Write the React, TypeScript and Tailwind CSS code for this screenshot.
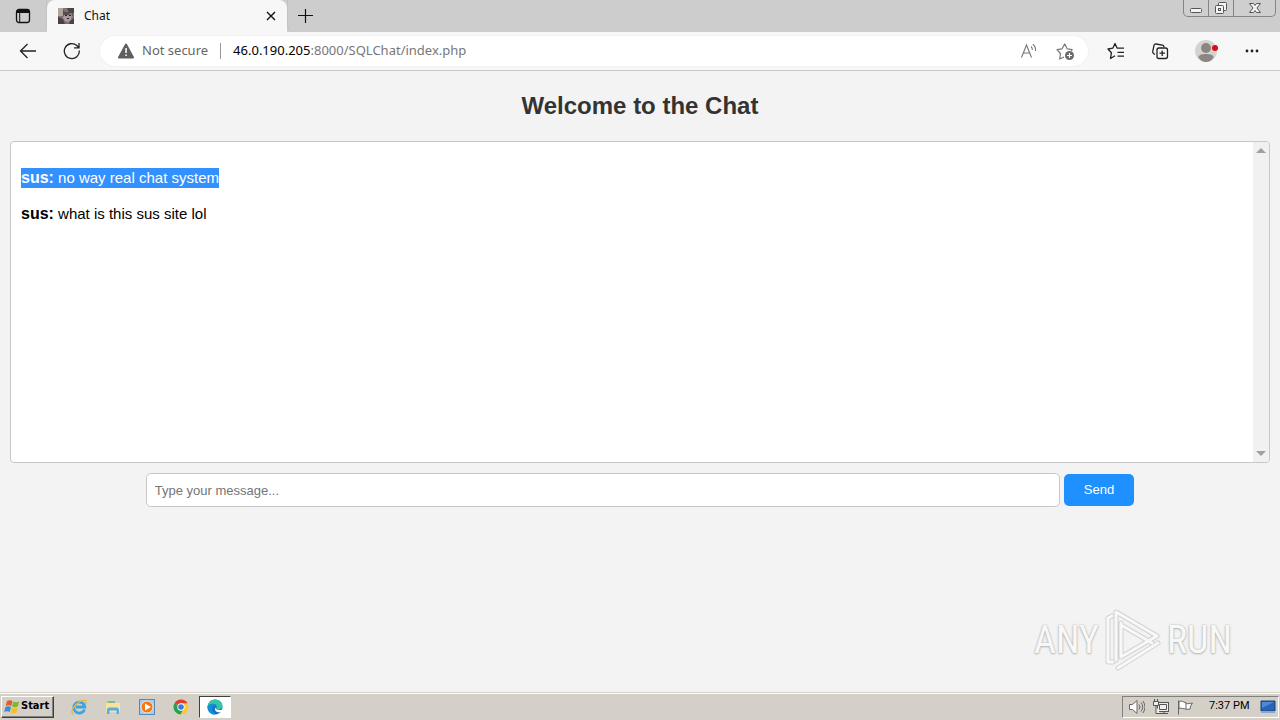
import { useState } from 'react';

const messages = [
  { id: 1, user: 'sus', text: 'no way real chat system', selected: true },
  { id: 2, user: 'sus', text: 'what is this sus site lol', selected: false },
];

function TabBar() {
  return (
    <div className="flex h-8 shrink-0 bg-[#cdcdcd]">
      <button aria-label="Tab actions" className="flex w-[47px] items-center justify-center rounded-br-lg border-r border-[#c2c2c2]">
        <svg className="h-4 w-4" viewBox="0 0 16 16" fill="none" stroke="#111">
          <rect x="1.5" y="1.5" width="13" height="13" rx="2.5" strokeWidth="1.3" />
          <path d="M2 3.5h12" strokeWidth="3" />
          <path d="M4.7 4v10" strokeWidth="1" />
        </svg>
      </button>
      <div className="flex w-60 items-center rounded-t-lg bg-[#f7f7f7] pr-2 pl-[11px]">
        <svg className="h-4 w-4" viewBox="0 0 16 16">
          <rect width="16" height="16" fill="#7d7370" />
          <path d="M0 0h5v8H0z" fill="#b3a59d" />
          <path d="M9 0h7v5h-5z" fill="#4c4543" />
          <path d="M6 6l2-1h3l3 2-1 5-3 2-3-1-2-3z" fill="#a99a9d" />
          <path d="M5 2l3 3-3 3zM14 3l-3 3 4 2zM6 4h8v3H6z" fill="#564e4f" />
          <path d="M7 7h2v1H7zM11 7h2v1h-2zM9 10h2v1H9z" fill="#292328" />
          <path d="M0 9l5 2 2 5H0zM12 13l4-3v6h-5z" fill="#494241" />
        </svg>
        <span className="ml-[10px] flex-1 text-xs">Chat</span>
        <button aria-label="Close tab" className="flex h-4 w-4 items-center justify-center">
          <svg className="h-[10px] w-[10px]" viewBox="0 0 10 10" stroke="#111" strokeWidth="1.4">
            <path d="M1 1l8 8M9 1L1 9" />
          </svg>
        </button>
      </div>
      <button aria-label="New tab" className="flex w-[34px] items-center justify-center rounded-bl-lg border-l border-[#c2c2c2]">
        <svg className="h-4 w-4" viewBox="0 0 16 16" stroke="#111" strokeWidth="1.2">
          <path d="M8.500 1v14M1 7.500h15" />
        </svg>
      </button>
      <div className="ml-auto mr-1 flex h-[17px] overflow-hidden rounded-b-[5px] border border-t-0 border-[#858585] bg-[#cfcfcf]">
        <button aria-label="Minimize" className="flex w-[25px] items-center justify-center border-r border-[#858585]">
          <svg className="h-4 w-4" viewBox="0 0 16 16" fill="#f4f4f4" stroke="#555">
            <rect x="2.5" y="8.5" width="11" height="4" rx="1" />
          </svg>
        </button>
        <button aria-label="Restore" className="flex w-[25px] items-center justify-center border-r border-[#858585]">
          <svg className="h-4 w-4" viewBox="0 0 16 16" fill="#f4f4f4" stroke="#555">
            <rect x="5.500" y="2.500" width="8" height="8" rx="1" />
            <rect x="2.500" y="5.500" width="8" height="8" rx="1" />
            <rect x="5.500" y="8.500" width="2" height="2" />
          </svg>
        </button>
        <button aria-label="Close window" className="flex w-[41px] items-center justify-center">
          <svg className="h-4 w-4" viewBox="0 0 16 16" fill="#f4f4f4" stroke="#555">
            <path d="M2.500 3.500h4L8 5.500l1.500-2h4l-3.500 4.500 3.500 4.500h-4L8 10.500l-1.500 2h-4L6 8z" />
          </svg>
        </button>
      </div>
    </div>
  );
}

function Toolbar() {
  return (
    <div className="flex h-[39px] shrink-0 items-center border-b border-[#c8c8c8] bg-[#f7f7f7]">
      <button aria-label="Back" className="ml-[19px] mr-[26px]">
        <svg className="h-[18px] w-[18px]" viewBox="0 0 18 18" fill="none" stroke="#222" strokeWidth="1.3">
          <path d="M17 9H2M8.500 2L1.500 9l7 7" />
        </svg>
      </button>
      <button aria-label="Refresh" className="mr-[19px]">
        <svg className="h-[18px] w-[18px]" viewBox="0 0 18 18" fill="none" stroke="#222" strokeWidth="1.3">
          <path d="M16.300 8.500A7.500 7.500 0 1 1 13.800 3.500L15.800 5.500M16 1v4.800h-5" />
        </svg>
      </button>
      <div className="flex h-[30px] flex-1 items-center rounded-full bg-white pr-3 pl-[17px] text-[13px] shadow-[0_0_0_1px_#f1f1f1]">
        <svg className="mr-[7px] h-[18px] w-[18px]" viewBox="0 0 18 18">
          <path d="M9 1.500c.4 0 .7.200.9.600l7 13c.3.700 0 1.400-.8 1.400H1.900c-.8 0-1.100-.7-.8-1.400l7-13c.2-.4.500-.6.900-.6z" fill="#5f5f5f" />
          <path d="M8.300 6h1.500v5H8.300zM8.300 12.500h1.500V14H8.300z" fill="#fff" />
        </svg>
        <span className="text-[#666]">Not secure</span>
        <span className="mx-3 h-4 w-px bg-[#999]" />
        <span className="flex-1 text-[#777]">
          <span className="text-black">46.0.190.205</span>:8000/SQLChat/index.php
        </span>
        <button aria-label="Read aloud" className="mr-[18px]">
          <svg className="h-[18px] w-[18px]" viewBox="0 0 18 18" fill="none" stroke="#777" strokeWidth="1.1">
            <path d="M1.500 15.500L6.500 3l5 12.500M3.300 11h6.400M11 4.500c1 .8 1.500 2 1.300 3.500M12.800 2.200c2 1.500 3 4 2.700 6.800" />
          </svg>
        </button>
        <button aria-label="Add to favorites">
          <svg className="h-5 w-5" viewBox="0 0 20 20" fill="none" stroke="#777" strokeWidth="1.2" strokeLinejoin="round">
            <path d="M8 16l-4.300 2 .8-5.500L1 8.600l5-.8L8.700 3l2.500 4.800 5 .8-1 1.200" />
            <circle cx="13.5" cy="14.5" r="4.5" fill="#6a6a6a" stroke="none" />
            <path d="M13.500 12v5M11 14.500h5" stroke="#fff" />
          </svg>
        </button>
      </div>
      <div className="ml-[18px] mr-5 flex items-center">
        <button aria-label="Favorites">
          <svg className="h-5 w-5" viewBox="0 0 20 20" fill="none" stroke="#222" strokeWidth="1.3" strokeLinejoin="round">
            <path d="M9 14.800l-4.500 2.700.9-5.700L2 8l4.800-.8L9 2.500l2.200 4.700H18M11.500 11.300H18M11.500 15.200H18" />
          </svg>
        </button>
        <button aria-label="Collections" className="ml-6">
          <svg className="h-5 w-5" viewBox="0 0 20 20" fill="none" stroke="#222" strokeWidth="1.3">
            <path d="M5 13.500l-1.500-1c-.7-.5-1-1-.8-1.800L4 4.500C4.200 3.400 5 2.800 6 3l6.500 1.200c.9.200 1.400.8 1.500 1.800" />
            <rect x="7" y="7" width="10.5" height="10.5" rx="2" />
            <path d="M12.200 9.500v5.500M9.500 12.200H15" />
          </svg>
        </button>
        <button aria-label="Profile" className="ml-6">
          <svg className="h-6 w-6" viewBox="0 0 24 24">
            <circle cx="12" cy="12" r="11" fill="#d4d3d0" />
            <circle cx="12" cy="9" r="5" fill="#8b8583" />
            <path d="M4.500 18.500c0-2.500 3-3.500 7.500-3.500s7.500 1 7.500 3.500C17.500 21.500 15 23 12 23s-5.500-1.500-7.500-4.500z" fill="#8b8583" />
            <circle cx="21" cy="9" r="3" fill="#dc0b1a" />
          </svg>
        </button>
        <button aria-label="Settings and more" className="ml-[26px]">
          <svg className="h-4 w-4" viewBox="0 0 16 16" fill="#222">
            <circle cx="3" cy="8" r="1.4" />
            <circle cx="8" cy="8" r="1.4" />
            <circle cx="13" cy="8" r="1.4" />
          </svg>
        </button>
      </div>
    </div>
  );
}

function ChatPage() {
  const [draft, setDraft] = useState('');

  return (
    <main className="flex-1 bg-[#f3f3f3] px-[10px] font-['Liberation_Sans',Arial,sans-serif]">
      <h2 className="mt-5 mb-5 text-center text-2xl leading-[30px] font-bold text-[#333]">Welcome to the Chat</h2>
      <div className="flex h-[322px] overflow-hidden rounded border border-[#c8c8c8] bg-white">
        <div className="flex-1 space-y-4 px-[10px] py-[26px] text-[15px] leading-5 text-black">
          {messages.map((message) => (
            <p key={message.id} className="flex">
              <span className={message.selected ? 'h-5 bg-[#3390ff] text-white' : 'h-5'}>
                <strong className="text-base leading-5">{message.user}:</strong> {message.text}
              </span>
            </p>
          ))}
        </div>
        <div className="flex w-4 flex-col items-center justify-between bg-[#f1f1f1] py-[5px]">
          <svg className="h-2 w-[10px]" viewBox="0 0 10 8" fill="#a0a0a0"><path d="M0 6l5-5 5 5z" /></svg>
          <svg className="h-2 w-[10px]" viewBox="0 0 10 8" fill="#a0a0a0"><path d="M0 2l5 5 5-5z" /></svg>
        </div>
      </div>
      <form className="mt-[10px] flex items-center justify-center gap-1 text-[13px]" onSubmit={(e) => e.preventDefault()}>
        <input
          type="text"
          aria-label="Message"
          value={draft}
          onChange={(e) => setDraft(e.target.value)}
          placeholder="Type your message..."
          className="box-content h-8 w-[70vw] rounded-[5px] border border-[#c8c8c8] bg-white px-2 placeholder:text-[#757575]"
        />
        <button type="submit" className="h-8 rounded-[5px] bg-[#1e90ff] px-5 text-white">Send</button>
      </form>
    </main>
  );
}

function Watermark() {
  return (
    <div className="pointer-events-none absolute right-12 bottom-12 flex items-center gap-1 font-['Liberation_Sans_Narrow','Roboto_Condensed','DejaVu_Sans_Condensed',sans-serif] text-[38px] leading-none text-[#f8f8f8] [text-shadow:0_0_2px_#aaa,0_1px_2px_#bbb]">
      <span>ANY</span>
      <svg className="h-16 w-[60px]" viewBox="0 0 60 64" fill="none" strokeLinejoin="round" strokeLinecap="round">
        <g stroke="#d2d2d2" strokeWidth="5">
          <path d="M10 54H5V10l4-2M13 52V4L54 28M18 15v34l36-21M18 17l31 18M15 60l40-25" />
        </g>
        <g stroke="#f8f8f8" strokeWidth="3">
          <path d="M10 54H5V10l4-2M13 52V4L54 28M18 15v34l36-21M18 17l31 18M15 60l40-25" />
        </g>
      </svg>
      <span>RUN</span>
    </div>
  );
}

function Taskbar() {
  return (
    <footer className="flex h-7 shrink-0 items-center border-t border-[#d4d0c8] bg-[#d4d0c8] pr-px pl-px text-[11px] shadow-[inset_0_1px_0_#fff]">
      <button className="mr-[17px] flex h-[22px] w-[53px] items-center gap-px border border-t-white border-r-[#404040] border-b-[#404040] border-l-white pl-[2px] font-['DejaVu_Sans_Condensed','Open_Sans',sans-serif] font-bold text-black shadow-[inset_-1px_-1px_0_#808080]">
        <svg className="h-4 w-4 shrink-0" viewBox="0 0 16 16">
          <path d="M3 2c2-1.300 4-1 5.500 0L7.300 7C5.500 6 3.500 6 1.700 7z" fill="#e85a24" />
          <path d="M9.300 2.500c2 1 4 1 6-.2L14 7.300c-2 1.200-4 1-6 .1z" fill="#7fb53a" />
          <path d="M1.400 8C3.500 7 5.300 7 7 8l-1.300 5c-1.700-1-3.700-1-5.500 0z" fill="#3c8bd9" />
          <path d="M7.800 8.500c2 1 4 1 6 0l-1.300 5c-2 1.200-4 1-6 .1z" fill="#f5c025" />
        </svg>
        Start
      </button>
      <nav className="flex items-center gap-[18px]">
        <button aria-label="Internet Explorer">
          <svg className="h-4 w-4" viewBox="0 0 16 16" fill="none">
            <path d="M13.500 10.500A5.500 5.500 0 1 1 13.800 8H5" stroke="#3ba3df" strokeWidth="2.8" />
            <path d="M3 15C-.5 15 .5 10 5 5.500S15 0 15 3c0 1-.3 1.500-.7 2.200" stroke="#e5b63a" strokeWidth="1.3" />
          </svg>
        </button>
        <button aria-label="File Explorer">
          <svg className="h-4 w-4" viewBox="0 0 16 16">
            <path d="M1 2h6l1 2h6v9H1z" fill="#e5c765" />
            <path d="M3 2h7v3H3z" fill="#86b989" />
            <path d="M1 4h14v9H1z" fill="#f6e39c" />
            <path d="M2 15v-4c0-1.500 1-2.500 2.500-2.500h7c1.500 0 2.500 1 2.500 2.500v4h-2.500v-3.500h-7V15z" fill="#59aedd" />
          </svg>
        </button>
        <button aria-label="Media Player">
          <svg className="h-4 w-4" viewBox="0 0 16 16">
            <rect x=".5" y=".5" width="15" height="15" fill="#a8cbea" stroke="#5489bd" />
            <circle cx="8" cy="8" r="6" fill="#f47a16" stroke="#fff" strokeWidth=".7" />
            <path d="M6 4.500v7L12 8z" fill="#fff" />
          </svg>
        </button>
        <button aria-label="Chrome">
          <svg className="h-4 w-4" viewBox="0 0 16 16">
            <circle cx="8" cy="8" r="7.5" fill="#fcc934" />
            <path d="M8 8L1.500 4.250A7.500 7.500 0 0 1 14.500 4.250H8z" fill="#e33b2e" />
            <path d="M1.500 4.250L8 8l1.800 3L7.500 15.500A7.500 7.500 0 0 1 1.500 4.250z" fill="#25a150" />
            <circle cx="8" cy="8" r="3.7" fill="#fff" />
            <circle cx="8" cy="8" r="2.8" fill="#3b78e7" />
          </svg>
        </button>
      </nav>
      <button aria-label="Edge" className="ml-[10px] flex h-[22px] w-8 items-center justify-center border border-t-[#404040] border-r-white border-b-white border-l-[#404040] bg-white">
        <svg className="h-4 w-4" viewBox="0 0 17 17">
          <circle cx="8.5" cy="8.5" r="8" fill="#1b6fca" />
          <path d="M.5 8C1 3.500 4.300.5 8.500.5c5 0 8 3.200 8 6.500 0 3-2 4.300-4.300 4.300-2 0-2.700-.9-2.300-1.700.4-.6.6-1.200.3-2C9.300 4.500 3 4 .5 8z" fill="#36c5a6" />
          <path d="M.5 8C3 4 9.300 4.500 10.200 7.600 8 6.500 5.500 8 5.500 10.500c0 2.500 1.800 4.700 4 5.800C4 17.300.3 13 .5 8z" fill="#1590d2" />
          <path d="M9.500 8.500c-.9 1.600.5 3.300 3.300 3.300 1.500 0 2.900-.5 4.200-1.300v3l-2 .3c-1 .4-2 .5-3.100.2-3-.3-4.500-3-2.400-5.500z" fill="#fff" />
        </svg>
      </button>
      <div className="ml-auto flex h-[22px] w-[157px] items-center border border-t-[#808080] border-r-white border-b-white border-l-[#808080] pl-[6px]">
        <svg className="h-4 w-4" viewBox="0 0 16 16" fill="none" stroke="#666">
          <path d="M.5 5.500h3L8 1.500v13l-4.500-4h-3z" fill="#fff" />
          <path d="M10 5.500q2 2.500 0 5M12 3.500q3.500 4.500 0 9M14 2q4 6 0 12" />
        </svg>
        <svg className="ml-2 h-4 w-4" viewBox="0 0 16 16" fill="#eee" stroke="#555">
          <rect x="4.5" y="3.5" width="11" height="9" />
          <path d="M6.500 5.500h7v5h-7zM7 14.500h8M11 12.500v2" />
          <path d="M1.500 0v3M4.500 0v3M.5 2.500h5v4h-5zM3 6.500v8h4" />
        </svg>
        <svg className="ml-2 h-4 w-4" viewBox="0 0 16 16" fill="#fff" stroke="#666">
          <path d="M1.500 15.500v-14M2 2.500c3-1.500 4 1 7 1v6.500C6 10 5 8.500 2 9.500zM9 4.500c2 .5 4 0 6.500-.5l-2 3-.5 3c-1.500.5-2.500.5-4 0" />
        </svg>
        <time className="ml-4 flex-1 whitespace-nowrap text-black font-['Roboto','Liberation_Sans',sans-serif]">7:37 PM</time>
        <button aria-label="Show desktop" className="mr-[2px]">
          <svg className="h-4 w-4" viewBox="0 0 16 16">
            <path d="M1 2h14v10H1z" fill="#2864b7" stroke="#1c4277" />
            <path d="M2 3h12L2 9z" fill="#4c8bd8" />
            <path d="M1 12h14v2H1z" fill="#87a8cd" />
          </svg>
        </button>
      </div>
    </footer>
  );
}

export default function App() {
  return (
    <div className="relative flex min-h-screen flex-col font-['Noto_Sans','Open_Sans',sans-serif] text-[#111]">
      <TabBar />
      <Toolbar />
      <ChatPage />
      <Taskbar />
      <Watermark />
    </div>
  );
}
